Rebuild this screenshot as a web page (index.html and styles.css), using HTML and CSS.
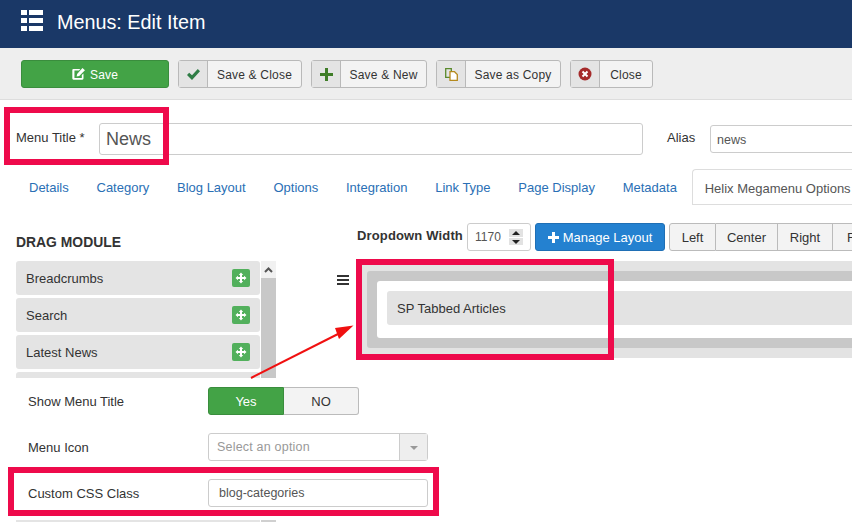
FILE: index.html
```html
<!DOCTYPE html>
<html lang="en">
<head>
<meta charset="utf-8">
<title>Menus: Edit Item</title>
<link rel="stylesheet" href="styles.css">
</head>
<body>
<div class="page">
  <header class="topbar">
    <svg class="topbar-icon" width="22" height="21" viewBox="0 0 22 21"><path fill="#fff" d="M0 0h6v5H0zM8 0h14v5H8zM0 8h6v5H0zM8 8h14v5H8zM0 16h6v5H0zM8 16h14v5H8z"/></svg>
    <h1 class="topbar-title">Menus: Edit Item</h1>
  </header>

  <div class="toolbar">
    <button class="btn btn-save">
      <svg width="13" height="12" viewBox="0 0 14 13"><path fill="#fff" d="M1.5 1H9L7.500 2.800H2.600v8h8V7.500L12.400 6v5.500a1.200 1.200 0 0 1-1.200 1.200H1.500A1.200 1.200 0 0 1 .3 11.500V2.200A1.200 1.200 0 0 1 1.500 1zM11.300 0 14 2.500 7.800 8.800 5 9.300l.5-2.900z"/></svg>
      <span class="btn-save-text">Save</span>
    </button>
    <button class="btn btn-split wide-close">
      <span class="btn-icon"><svg width="13" height="11" viewBox="0 0 13 11"><path fill="#2f7d46" d="M0 6l2.200-2.300L5 6.300 10.800 0 13 2.300 5 11z"/></svg></span>
      <span class="btn-label">Save &amp; Close</span>
    </button>
    <button class="btn btn-split wide-new">
      <span class="btn-icon"><svg width="13" height="13" viewBox="0 0 13 13"><path fill="#3f7d28" d="M5 0h3v5h5v3H8v5H5V8H0V5h5z"/></svg></span>
      <span class="btn-label">Save &amp; New</span>
    </button>
    <button class="btn btn-split wide-copy">
      <span class="btn-icon"><svg width="13" height="13" viewBox="0 0 13 13"><path fill="none" stroke="#5a8a2c" stroke-width="1.300" d="M.7.700h5.600v8.600H.7z"/><path fill="#fff" stroke="#b58a1e" stroke-width="1.300" d="M5 3.700h4.500l2.800 2.800v5.800H5z"/></svg></span>
      <span class="btn-label">Save as Copy</span>
    </button>
    <button class="btn btn-split wide-cancel">
      <span class="btn-icon"><svg width="14" height="14" viewBox="0 0 14 14"><circle cx="7" cy="7" r="6.500" fill="#a52a2a"/><path stroke="#fff" stroke-width="2" d="M4.500 4.500l5 5M9.500 4.500l-5 5"/></svg></span>
      <span class="btn-label">Close</span>
    </button>
  </div>

  <div class="title-row">
    <label class="title-label">Menu Title *</label>
    <input class="title-input" value="News">
    <label class="alias-label">Alias</label>
    <input class="alias-input" value="news">
  </div>

  <nav class="tabs">
    <a class="tab">Details</a>
    <a class="tab">Category</a>
    <a class="tab">Blog Layout</a>
    <a class="tab">Options</a>
    <a class="tab">Integration</a>
    <a class="tab">Link Type</a>
    <a class="tab">Page Display</a>
    <a class="tab">Metadata</a>
    <a class="tab tab-active">Helix Megamenu Options</a>
  </nav>

  <main class="panel">
    <section class="side">
      <h2 class="side-heading">DRAG MODULE</h2>
      <div class="modules">
        <ul class="module-list">
          <li class="module">Breadcrumbs<span class="move"><svg width="12" height="12" viewBox="0 0 12 12"><path fill="#fff" d="M6 .5 8.200 3H7v2h2V3.800L11.500 6 9 8.200V7H7v2h1.200L6 11.500 3.800 9H5V7H3v1.200L.5 6 3 3.800V5h2V3H3.800z"/></svg></span></li>
          <li class="module">Search<span class="move"><svg width="12" height="12" viewBox="0 0 12 12"><path fill="#fff" d="M6 .5 8.200 3H7v2h2V3.800L11.500 6 9 8.200V7H7v2h1.200L6 11.500 3.800 9H5V7H3v1.200L.5 6 3 3.800V5h2V3H3.800z"/></svg></span></li>
          <li class="module">Latest News<span class="move"><svg width="12" height="12" viewBox="0 0 12 12"><path fill="#fff" d="M6 .5 8.200 3H7v2h2V3.800L11.500 6 9 8.200V7H7v2h1.200L6 11.500 3.800 9H5V7H3v1.200L.5 6 3 3.800V5h2V3H3.800z"/></svg></span></li>
          <li class="module"></li>
        </ul>
        <div class="scrollbar"><span class="scroll-up"><svg width="9" height="6" viewBox="0 0 9 6"><path fill="none" stroke="#555" stroke-width="2" d="M1 5l3.500-3.500L8 5"/></svg></span></div>
      </div>

      <div class="fields">
        <div class="field field-toggle">
          <span class="field-label">Show Menu Title</span>
          <div class="toggle"><span class="toggle-yes">Yes</span><span class="toggle-no">NO</span></div>
        </div>
        <div class="field field-select">
          <span class="field-label">Menu Icon</span>
          <div class="select"><span class="select-text">Select an option</span><span class="select-arrow"></span></div>
        </div>
        <div class="field field-css">
          <span class="field-label">Custom CSS Class</span>
          <input class="field-input" value="blog-categories">
        </div>
      </div>
      <div class="peek"><span class="peek-item"></span><span class="peek-bar"></span></div>
    </section>

    <section class="canvas">
      <div class="canvas-tools">
        <strong class="tools-label">Dropdown Width</strong>
        <div class="number">
          <span>1170</span>
          <span class="spinner"><i class="spin-up"></i><i class="spin-down"></i></span>
        </div>
        <button class="btn-manage"><svg width="11" height="11" viewBox="0 0 11 11"><path fill="#fff" d="M4 0h3v4h4v3H7v4H4V7H0V4h4z"/></svg> Manage Layout</button>
        <div class="align-group"><span class="align left">Left</span><span class="align center">Center</span><span class="align right">Right</span><span class="align full">Full</span></div>
      </div>
      <div class="layout-row">
        <span class="handle"><i></i><i></i><i></i></span>
        <div class="layout-outer">
          <div class="layout-mid">
            <div class="layout-inner">
              <div class="layout-module">SP Tabbed Articles</div>
            </div>
          </div>
        </div>
      </div>
    </section>
  </main>

  <div class="mark mark-title"></div>
  <div class="mark mark-module"></div>
  <div class="mark mark-css"></div>
  <svg class="arrow" width="112" height="56" viewBox="0 0 112 56"><path stroke="#f01010" stroke-width="2" d="M1 55L90 10"/><path fill="#f01010" d="M103.500 2.500 85 5l4 11z"/></svg>
</div>
</body>
</html>
```

FILE: styles.css
```css
* { box-sizing: border-box; }
html, body { margin: 0; padding: 0; }
body {
  width: 852px;
  height: 522px;
  overflow: hidden;
  background: #fff;
  font-family: "Liberation Sans", Arial, sans-serif;
  font-size: 13px;
  color: #333;
}
.page { position: relative; width: 852px; height: 522px; overflow: hidden; }

.topbar {
  height: 48px;
  background: #1a3867;
  display: flex;
  align-items: center;
  padding: 0 0 4px 21px;
}
.topbar-icon { display: block; margin-bottom: 3px; }
.topbar-title {
  margin: 0 0 0 14px;
  font-size: 19.800px;
  font-weight: 400;
  color: #fff;
}

.toolbar {
  height: 52px;
  background: #eee;
  border-bottom: 1px solid #ddd;
  padding: 12px 0 0 21px;
  display: flex;
  gap: 9px;
  align-items: flex-start;
}
.btn {
  height: 28px;
  padding: 0;
  font: 12px "Liberation Sans", Arial, sans-serif;
  letter-spacing: 0.2px;
  border: 1px solid #b9b9b9;
  border-radius: 3px;
  background: #f3f3f3;
  color: #333;
  display: flex;
  align-items: stretch;
}
.btn-save {
  width: 148px;
  background: #43a346;
  border-color: #3a8d3d;
  color: #fff;
  align-items: center;
  justify-content: center;
  gap: 5px;
}
.btn-save-text { padding-top: 1px; }
.btn-icon {
  width: 29px;
  background: #e4e4e4;
  border-right: 1px solid #b9b9b9;
  display: flex;
  align-items: center;
  justify-content: center;
}
.btn-label { flex: 1; display: flex; align-items: center; justify-content: center; padding-top: 1px; }
.wide-close { width: 124px; }
.wide-new { width: 116px; }
.wide-copy { width: 125px; }
.wide-cancel { width: 83px; }

.title-row {
  height: 69px;
  padding: 23px 0 0 16px;
  display: flex;
  align-items: flex-start;
}
.title-label { flex: none; width: 83px; margin-top: 7px; font-size: 13px; }
.title-input {
  flex: none;
  width: 544px;
  height: 32px;
  padding: 0 6px;
  border: 1px solid #ccc;
  border-radius: 3px;
  font: 18px "Liberation Sans", Arial, sans-serif;
  color: #555;
}
.alias-label { flex: none; margin: 7px 0 0 24px; width: 43px; font-size: 13px; }
.alias-input {
  flex: none;
  width: 180px;
  height: 28px;
  margin-top: 2px;
  padding: 1px 6px 0;
  border: 1px solid #ccc;
  border-radius: 3px;
  font: 12.500px "Liberation Sans", Arial, sans-serif;
  color: #555;
}

.tabs {
  height: 36px;
  padding-left: 16px;
  display: flex;
  white-space: nowrap;
}
.tab {
  flex: none;
  padding: 11px 13px 0 13px;
  margin-right: 1.750px;
  color: #2a6fb5;
  font-size: 13px;
}
.tab-active {
  width: 170px;
  margin: 0;
  padding: 11px 0 0 12px;
  color: #555;
  border: 1px solid #ddd;
  border-right: 0;
  border-radius: 4px 0 0 0;
}

.panel {
  display: flex;
  align-items: flex-start;
  padding: 18px 0 0 16px;
}
.side { width: 341px; flex: none; }
.side-heading { margin: 11px 0 0; height: 16px; line-height: 16px; font-size: 13.900px; font-weight: 700; }
.modules {
  display: flex;
  gap: 1px;
  margin-top: 11px;
  height: 117px;
  overflow: hidden;
}
.module-list { list-style: none; margin: 0; padding: 0; width: 244px; }
.module {
  height: 34px;
  margin-bottom: 3px;
  padding: 0 10px;
  background: #e4e4e4;
  border-radius: 3px;
  display: flex;
  align-items: center;
  justify-content: space-between;
  font-size: 13px;
}
.move {
  width: 18px;
  height: 18px;
  background: #52b05c;
  border-radius: 2px;
  display: flex;
  align-items: center;
  justify-content: center;
}
.scrollbar { width: 15px; background: #c8c8c8; }
.scroll-up { height: 17px; background: #f1f1f1; display: flex; align-items: center; justify-content: center; }

.fields { display: flex; flex-direction: column; }
.field { display: flex; align-items: center; padding-left: 12px; }
.field-label { flex: none; width: 180px; font-size: 13px; padding-top: 1px; }
.field-toggle { margin-top: 9px; height: 28px; }
.field-select { margin-top: 18px; height: 28px; }
.field-css { margin-top: 18px; height: 28px; }
.toggle { flex: none; display: flex; width: 151px; height: 28px; font-size: 13px; }
.toggle-yes {
  width: 76px;
  background: #43a346;
  border: 1px solid #3a8d3d;
  border-radius: 3px 0 0 3px;
  color: #fff;
  display: flex;
  align-items: center;
  justify-content: center;
}
.toggle-no {
  width: 75px;
  background: #f3f3f3;
  border: 1px solid #bbb;
  border-left: 0;
  border-radius: 0 3px 3px 0;
  display: flex;
  align-items: center;
  justify-content: center;
}
.select {
  flex: none;
  width: 220px;
  height: 28px;
  border: 1px solid #ccc;
  border-radius: 3px;
  display: flex;
  font-size: 12.500px;
  letter-spacing: 0.2px;
  color: #999;
}
.select-text { flex: 1; padding-left: 8px; display: flex; align-items: center; }
.select-arrow {
  width: 28px;
  background: #eee;
  border-left: 1px solid #ccc;
  position: relative;
}
.select-arrow::after {
  content: "";
  position: absolute;
  left: 10px;
  top: 12px;
  border: 4px solid transparent;
  border-top: 4px solid #999;
  border-bottom: 0;
}
.field-input {
  flex: none;
  width: 220px;
  height: 28px;
  padding: 0 10px;
  border: 1px solid #ccc;
  border-radius: 3px;
  font: 12.500px "Liberation Sans", Arial, sans-serif;
  color: #555;
}
.peek { display: flex; gap: 1px; margin-top: 13px; height: 2px; }
.peek-item { width: 244px; background: #e4e4e4; }
.peek-bar { width: 15px; background: #d0d0d0; }

.canvas { flex: none; width: 600px; }
.canvas-tools { display: flex; align-items: center; height: 28px; }
.tools-label { flex: none; font-size: 13px; letter-spacing: 0.15px; width: 110px; margin-top: -4px; }
.number {
  flex: none;
  width: 64px;
  height: 28px;
  border: 1px solid #ccc;
  border-radius: 3px;
  display: flex;
  align-items: center;
  justify-content: space-between;
  padding: 0 7px;
  font-size: 12px;
  color: #555;
}
.spinner { width: 14px; height: 16px; display: flex; flex-direction: column; gap: 1px; }
.spinner i { flex: 1; background: #e2e2e2; position: relative; }
.spinner i::after { content: ""; position: absolute; left: 3px; top: 2px; border: 4px solid transparent; }
.spinner .spin-up::after { border-bottom: 4px solid #222; border-top: 0; }
.spinner .spin-down::after { border-top: 4px solid #222; border-bottom: 0; }
.btn-manage {
  flex: none;
  margin-left: 4px;
  width: 130px;
  height: 28px;
  padding: 0;
  background: #2481d0;
  border: 1px solid #1f6fb5;
  border-radius: 3px;
  color: #fff;
  font: 13px "Liberation Sans", Arial, sans-serif;
  display: flex;
  align-items: center;
  justify-content: center;
  gap: 4px;
}
.align-group { flex: none; margin-left: 4px; display: flex; height: 28px; white-space: nowrap; }
.align {
  background: #f3f3f3;
  border: 1px solid #bbb;
  border-left: 0;
  font-size: 13px;
  display: flex;
  align-items: center;
  justify-content: center;
}
.align.left { width: 47px; border-left: 1px solid #bbb; border-radius: 3px 0 0 3px; }
.align.center { width: 62px; }
.align.right { width: 55px; }
.align.full { width: 50px; }

.layout-row { display: flex; margin-top: 10px; margin-left: -22px; }
.handle { width: 27px; flex: none; padding: 14px 0 0 2px; display: flex; flex-direction: column; gap: 2px; }
.handle i { display: block; width: 12px; height: 2px; background: #333; }
.layout-outer { flex: 1; min-width: 600px; background: #e3e3e3; padding: 10px 0 10px 5px; height: 97px; }
.layout-mid { background: #c8c8c8; border-radius: 3px 0 0 3px; padding: 10px 0 10px 10px; height: 77px; }
.layout-inner { background: #fff; border-radius: 3px 0 0 3px; padding: 10px 0 0 10px; height: 57px; }
.layout-module {
  height: 34px;
  background: #e3e3e3;
  border-radius: 3px 0 0 3px;
  padding-left: 10px;
  display: flex;
  align-items: center;
  font-size: 13px;
}

.mark { position: absolute; border: 6px solid #ee0a4b; }
.mark-title { left: 4px; top: 107px; width: 165px; height: 58px; }
.mark-module { left: 356px; top: 259px; width: 258px; height: 101px; }
.mark-css { left: 8px; top: 467px; width: 431px; height: 49px; }
.arrow { position: absolute; left: 250px; top: 323px; }
```
